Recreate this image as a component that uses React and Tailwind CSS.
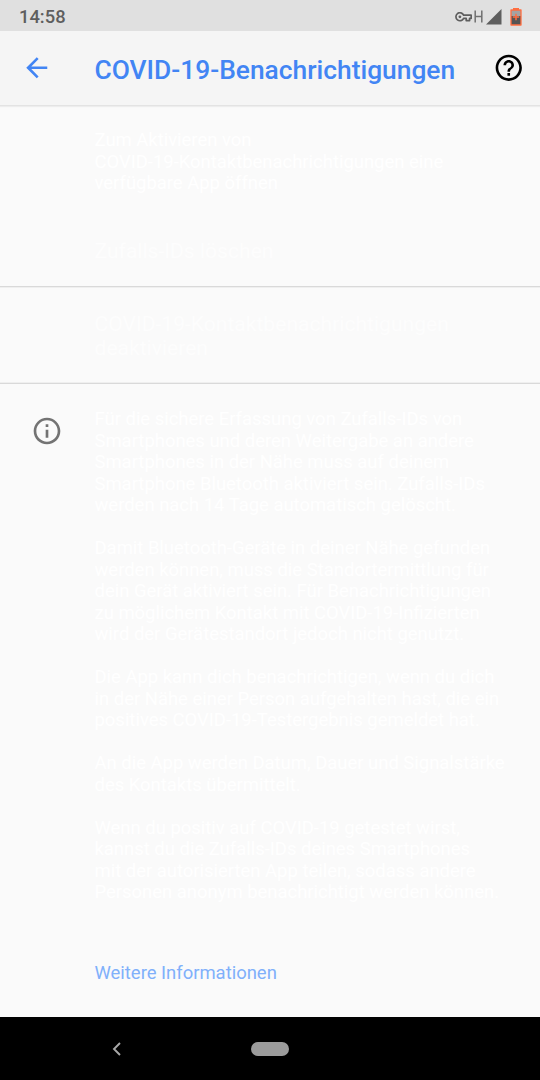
const paragraphs = [
  [
    'Für die sichere Erfassung von Zufalls-IDs von',
    'Smartphones und deren Weitergabe an andere',
    'Smartphones in der Nähe muss auf deinem',
    'Smartphone Bluetooth aktiviert sein. Zufalls-IDs',
    'werden nach 14 Tage automatisch gelöscht.',
  ],
  [
    'Damit Bluetooth-Geräte in deiner Nähe gefunden',
    'werden können, muss die Standortermittlung für',
    'dein Gerät aktiviert sein. Für Benachrichtigungen',
    'zu möglichem Kontakt mit COVID-19-Infizierten',
    'wird der Gerätestandort jedoch nicht genutzt.',
  ],
  [
    'Die App kann dich benachrichtigen, wenn du dich',
    'in der Nähe einer Person aufgehalten hast, die ein',
    'positives COVID-19-Testergebnis gemeldet hat.',
  ],
  [
    'An die App werden Datum, Dauer und Signalstärke',
    'des Kontakts übermittelt.',
  ],
  [
    'Wenn du positiv auf COVID-19 getestet wirst,',
    'kannst du die Zufalls-IDs deines Smartphones',
    'mit der autorisierten App teilen, sodass andere',
    'Personen anonym benachrichtigt werden können.',
  ],
];

function Lines({ lines }) {
  return lines.map((line) => (
    <span key={line} className="block whitespace-nowrap">
      {line}
    </span>
  ));
}

function StatusBar() {
  return (
    <div className="flex h-[31px] shrink-0 items-center bg-[#e0e0e0] pl-[19px] pr-[18px] pt-[2px] text-[#5e5e5e]">
      <span className="pt-[1px] text-[18.375px] font-medium leading-none">14:58</span>
      <div className="ml-auto flex items-center">
        <svg className="h-[10px] w-[17px]" viewBox="0 0 17 10" fill="none" stroke="currentColor" strokeWidth="1.7">
          <path d="M8.6 3.2H16.2V6.3H14.6V8.6H11.2V6.3H8.6A4 4 0 1 1 8.6 3.2Z" strokeLinejoin="round" />
          <circle cx="4.9" cy="4.8" r="1.4" fill="currentColor" stroke="none" />
        </svg>
        <svg className="ml-[2px] h-[13px] w-[9px]" viewBox="0 0 9 13" fill="none" stroke="#707070" strokeWidth="1.5">
          <path d="M1.2 .5V12.5M7.8 .5V12.5M1.2 6.4H7.8" />
        </svg>
        <svg className="ml-[3px] h-[16px] w-[16px]" viewBox="0 0 16 16">
          <path d="M0 15.5L15.5 0V15.5Z" fill="currentColor" />
        </svg>
        <svg className="ml-[8px] h-[19px] w-[12px]" viewBox="0 0 12 19">
          <path d="M1 3H11V9H1Z" fill="#a3a3a3" />
          <path d="M1 9H11V18H1Z" fill="#555555" />
          <path d="M3 1H9V3H3Z" fill="#ff6e40" />
          <path d="M1 3H11V18H1Z" fill="none" stroke="#ff6e40" strokeWidth="1.3" strokeLinejoin="round" />
          <path d="M6 6.7V13.3M2.8 10H9.2" stroke="#ff6e40" strokeWidth="1.5" />
        </svg>
      </div>
    </div>
  );
}

function AppBar() {
  return (
    <header className="flex h-[75px] shrink-0 items-center border-b border-[#e3e3e3] bg-[#f5f5f5] pl-[21px] pr-4 text-[#4285f4] shadow-[0_1px_1px_rgba(0,0,0,0.05)]">
      <svg className="h-[31.5px] w-[31.5px]" viewBox="0 0 24 24" fill="currentColor">
        <path d="M20 11H7.83l5.59-5.59L12 4l-8 8 8 8 1.41-1.41L7.83 13H20v-2z" />
      </svg>
      <h1 className="ml-[42px] whitespace-nowrap pt-[5px] text-[26.36px] font-medium leading-none">
        COVID-19-Benachrichtigungen
      </h1>
      <svg className="ml-auto h-[31.5px] w-[31.5px] shrink-0 text-black" viewBox="0 0 24 24" fill="currentColor">
        <path d="M11 18h2v-2h-2v2zm1-16C6.48 2 2 6.48 2 12s4.48 10 10 10 10-4.48 10-10S17.52 2 12 2zm0 18c-4.41 0-8-3.59-8-8s3.59-8 8-8 8 3.59 8 8-3.59 8-8 8zm0-14c-2.21 0-4 1.79-4 4h2c0-1.1.9-2 2-2s2 .9 2 2c0 2-3 1.75-3 5h2c0-2.25 3-2.5 3-5 0-2.21-1.79-4-4-4z" />
      </svg>
    </header>
  );
}

function NavigationBar() {
  return (
    <nav className="grid h-[63px] shrink-0 grid-cols-[233px_74px_233px] items-center bg-black">
      <svg className="ml-[112px] h-[14px] w-[9px]" viewBox="0 0 9 14" fill="none" stroke="#a8a8a8" strokeWidth="1.9">
        <path d="M8 1L2 7L8 13" />
      </svg>
      <span className="h-[14px] w-[38px] justify-self-center rounded-full bg-[#9b9b9b]" />
    </nav>
  );
}

export default function App() {
  return (
    <div className="flex h-[1080px] w-[540px] flex-col overflow-hidden bg-[#fafafa] font-['Roboto',sans-serif]">
      <StatusBar />
      <AppBar />
      <main className="flex min-h-0 flex-1 flex-col">
        <section className="h-[181px] shrink-0 border-b border-[#d9d9d9] pl-[94.5px] pt-[24px]">
          <p className="text-[18.45px] leading-[21.5px] text-white">
            <Lines lines={['Zum Aktivieren von', 'COVID-19-Kontaktbenachrichtigungen eine', 'verfügbare App öffnen']} />
          </p>
          <p className="mt-[43.5px] text-[21.08px] leading-[25px] text-[#fdfdfd]">Zufalls-IDs löschen</p>
        </section>
        <section className="h-[96px] shrink-0 border-b border-[#efefef] border-t border-t-[#efefef] pl-[94.5px] pt-[23.75px] text-[21.08px] leading-[24.6px] text-[#fdfdfd]">
          <Lines lines={['COVID-19-Kontaktbenachrichtigungen', 'deaktivieren']} />
        </section>
        <section className="flex border-t border-[#d9d9d9] pt-[24px]">
          <div className="w-[94.5px] shrink-0 pl-[31px] pt-[7px]">
            <svg className="h-[32px] w-[32px] text-[#737373]" viewBox="0 0 24 24" fill="currentColor">
              <path d="M11 17h2v-6h-2v6zm1-15C6.48 2 2 6.48 2 12s4.48 10 10 10 10-4.48 10-10S17.52 2 12 2zm0 18c-4.41 0-8-3.59-8-8s3.59-8 8-8 8 3.59 8 8-3.59 8-8 8zM11 9h2V7h-2v2z" />
            </svg>
          </div>
          <div className="flex flex-col gap-[21.5px] pt-[1px] text-[18.45px] leading-[21.5px] text-white">
            {paragraphs.map((lines) => (
              <p key={lines[0]}>
                <Lines lines={lines} />
              </p>
            ))}
          </div>
        </section>
        <a className="ml-[94.5px] mt-[59px] self-start text-[18.45px] leading-[21.5px] text-[#80b0fa]">
          Weitere Informationen
        </a>
      </main>
      <NavigationBar />
    </div>
  );
}
